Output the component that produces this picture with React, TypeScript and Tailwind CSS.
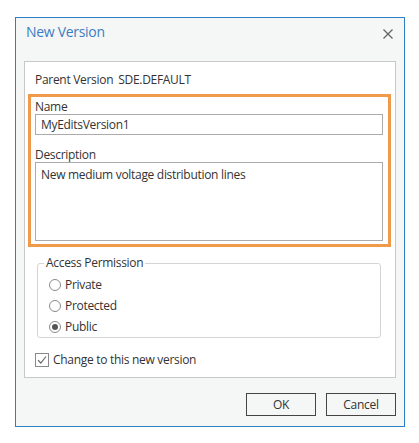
import React from "react";

const font = { fontFamily: '"Open Sans", "Noto Sans", sans-serif' };

function Radio({ label, checked, top }: { label: string; checked?: boolean; top: string }) {
  return (
    <div className={`flex items-center h-[21px] ${top}`}>
      <span className="ml-[11px] w-[12px] h-[12px] rounded-full border border-[#8a8a8a] bg-white flex items-center justify-center">
        {checked && <span className="w-[6px] h-[6px] rounded-full bg-[#555]" />}
      </span>
      <span className="ml-[4px] text-[12px] tracking-[-0.3px] text-[#333]">{label}</span>
    </div>
  );
}

export default function App() {
  return (
    <div className="w-[419px] h-[443px] bg-white pt-[17px] pl-[15px]" style={font}>
      <div className="w-[390px] h-[410px] border border-[#2d7fc6] bg-[#f5f7f6] flex flex-col">
        <div className="h-[43px] flex items-start justify-between">
          <span className="mt-[4px] ml-[10px] text-[14px] tracking-[-0.3px] text-[#3b7dc4] leading-[20px]">New Version</span>
          <svg className="mt-[11px] mr-[11px]" width="10" height="10" viewBox="0 0 10 10">
            <path d="M0.5 0.5 L9.5 9.5 M9.5 0.5 L0.5 9.5" stroke="#606060" strokeWidth="1.2" />
          </svg>
        </div>
        <div className="mx-[8px] h-[317px] border border-[#c8c8c8] bg-white flex flex-col text-[12px] tracking-[-0.3px] text-[#333]">
          <div className="mt-[10px] ml-[10px] h-[16px] flex items-center">
            <span>Parent Version</span>
            <span className="ml-[5px]">SDE.DEFAULT</span>
          </div>
          <div className="mt-[6px] ml-[3px] w-[363px] h-[153px] border-[3px] border-[#f0994b] flex flex-col pl-[4px] pr-[5px]">
            <div className="mt-[3px] h-[14px] flex items-center">Name</div>
            <div className="h-[21px] border border-[#ababab] flex items-center pl-[5px]">MyEditsVersion1</div>
            <div className="mt-[13px] h-[14px] flex items-center">Description</div>
            <div className="h-[79px] border border-[#ababab] pl-[5px] pt-[4px] leading-[16px]">New medium voltage distribution lines</div>
          </div>
          <fieldset className="mt-[9px] ml-[12px] w-[344px] h-[82px] border border-[#d5d5d5] rounded-[3px] pl-0 pr-0 relative">
            <legend className="ml-[6px] px-[2px] leading-[14px]">Access Permission</legend>
            <Radio label="Private" top="mt-[4px]" />
            <Radio label="Protected" top="" />
            <Radio label="Public" checked top="" />
          </fieldset>
          <div className="mt-[14px] ml-[10px] flex items-center h-[15px]">
            <span className="w-[14px] h-[14px] border border-[#8a8a8a] bg-white flex items-center justify-center">
              <svg width="10" height="10" viewBox="0 0 10 10">
                <path d="M1 5.2 L3.8 8 L9 1.5" stroke="#666" strokeWidth="1.2" fill="none" />
              </svg>
            </span>
            <span className="ml-[4px]">Change to this new version</span>
          </div>
        </div>
        <div className="flex justify-end gap-[10px] mt-[15px] mr-[8px]">
          <button className="w-[70px] h-[23px] border border-[#444] bg-[#f5f7f6] text-[12px] tracking-[-0.3px] text-[#333]">OK</button>
          <button className="w-[70px] h-[23px] border border-[#444] bg-[#f5f7f6] text-[12px] tracking-[-0.3px] text-[#333]">Cancel</button>
        </div>
      </div>
    </div>
  );
}
